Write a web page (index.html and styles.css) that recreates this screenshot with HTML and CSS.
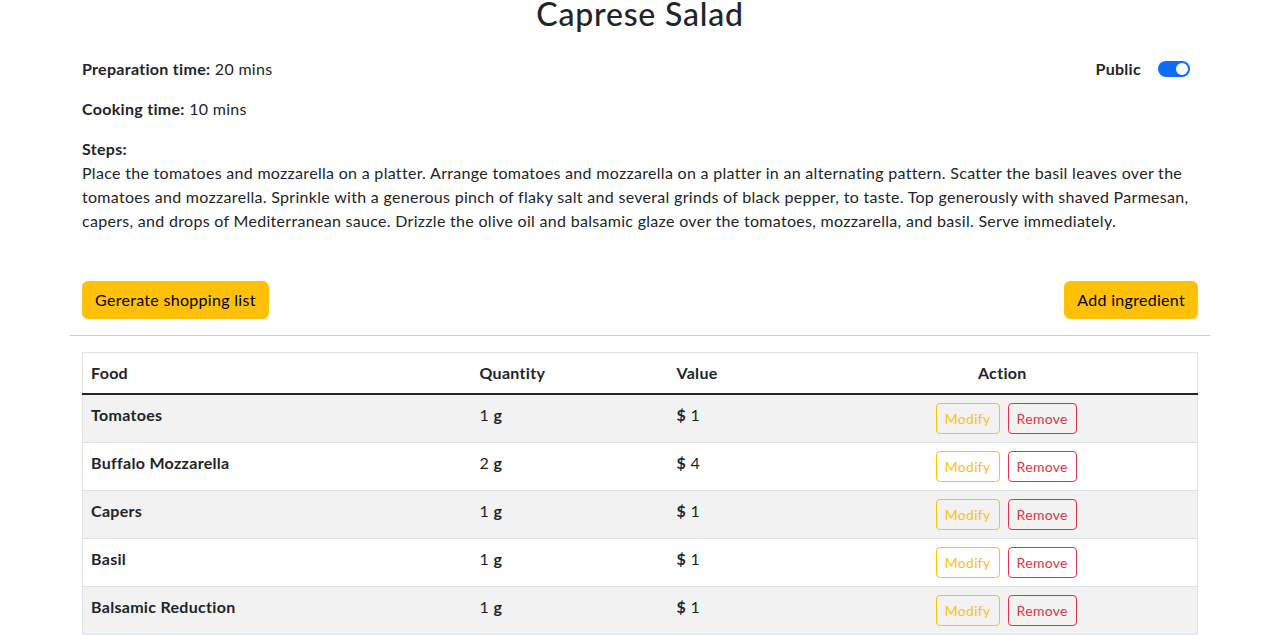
FILE: index.html
```html
<!DOCTYPE html>
<html lang="en">
<head>
<meta charset="utf-8">
<title>Caprese Salad</title>
<link rel="stylesheet" href="styles.css">
</head>
<body>
<div class="container">
  <h1 class="title">Caprese Salad</h1>
  <div class="details">
    <div class="meta-row">
      <p class="meta"><b>Preparation time:</b> 20 mins</p>
      <div class="public">
        <span class="public-label">Public</span>
        <span class="switch"><span class="knob"></span></span>
      </div>
    </div>
    <p class="meta"><b>Cooking time:</b> 10 mins</p>
    <div class="steps">
      <b>Steps:</b>
      <p>Place the tomatoes and mozzarella on a platter. Arrange tomatoes and mozzarella on a platter in an alternating pattern. Scatter the basil leaves over the tomatoes and mozzarella. Sprinkle with a generous pinch of flaky salt and several grinds of black pepper, to taste. Top generously with shaved Parmesan, capers, and drops of Mediterranean sauce. Drizzle the olive oil and balsamic glaze over the tomatoes, mozzarella, and basil. Serve immediately.</p>
    </div>
    <div class="actions">
      <button class="btn btn-warning">Gererate shopping list</button>
      <button class="btn btn-warning">Add ingredient</button>
    </div>
  </div>
  <hr class="divider">
  <div class="table-wrap">
    <table class="ingredients">
      <colgroup>
        <col class="c-food"><col class="c-qty"><col class="c-val"><col class="c-act">
      </colgroup>
      <thead>
        <tr><th>Food</th><th>Quantity</th><th>Value</th><th class="th-action">Action</th></tr>
      </thead>
      <tbody>
        <tr class="odd"><td><b>Tomatoes</b></td><td>1 <b>g</b></td><td><b>$</b> 1</td><td><div class="row-actions"><button class="btn-sm btn-outline-warning">Modify</button><button class="btn-sm btn-outline-danger">Remove</button></div></td></tr>
        <tr><td><b>Buffalo Mozzarella</b></td><td>2 <b>g</b></td><td><b>$</b> 4</td><td><div class="row-actions"><button class="btn-sm btn-outline-warning">Modify</button><button class="btn-sm btn-outline-danger">Remove</button></div></td></tr>
        <tr class="odd"><td><b>Capers</b></td><td>1 <b>g</b></td><td><b>$</b> 1</td><td><div class="row-actions"><button class="btn-sm btn-outline-warning">Modify</button><button class="btn-sm btn-outline-danger">Remove</button></div></td></tr>
        <tr><td><b>Basil</b></td><td>1 <b>g</b></td><td><b>$</b> 1</td><td><div class="row-actions"><button class="btn-sm btn-outline-warning">Modify</button><button class="btn-sm btn-outline-danger">Remove</button></div></td></tr>
        <tr class="odd"><td><b>Balsamic Reduction</b></td><td>1 <b>g</b></td><td><b>$</b> 1</td><td><div class="row-actions"><button class="btn-sm btn-outline-warning">Modify</button><button class="btn-sm btn-outline-danger">Remove</button></div></td></tr>
      </tbody>
    </table>
  </div>
</div>
</body>
</html>
```
FILE: styles.css
```css
* { box-sizing: border-box; }
html, body {
  margin: 0;
  padding: 0;
  background: #fff;
}
body {
  font-family: Lato, "Noto Sans", sans-serif;
  font-size: 16px;
  line-height: 24px;
  letter-spacing: 0.3px;
  color: #212529;
}
.container {
  width: 1140px;
  margin: 0 auto;
}
.title {
  margin: 0 0 29px;
  font-size: 32px;
  line-height: 28px;
  letter-spacing: 0.8px;
  font-weight: 500;
  text-align: center;
}
.details {
  padding: 0 12px;
}
.meta-row {
  display: flex;
  justify-content: space-between;
  align-items: center;
}
.meta {
  margin: 0 0 16px;
}
.public {
  display: flex;
  align-items: center;
  gap: 17px;
  margin-right: 8px;
  margin-bottom: 16px;
}
.public-label { font-weight: 700; }
.switch {
  display: flex;
  align-items: center;
  justify-content: flex-end;
  width: 32px;
  height: 16px;
  border-radius: 8px;
  background: #0d6efd;
  padding: 0 2px;
}
.knob {
  width: 12px;
  height: 12px;
  border-radius: 50%;
  background: #fff;
}
.steps p {
  margin: 0 0 16px;
}
.actions {
  display: flex;
  justify-content: space-between;
  margin-top: 48px;
}
.btn {
  font-family: inherit;
  font-size: 16px;
  line-height: 24px;
  letter-spacing: 0.3px;
  padding: 6px 12px;
  border: 1px solid transparent;
  border-radius: 6px;
  color: #000;
  cursor: pointer;
}
.btn-warning {
  background: #ffc107;
  border-color: #ffc107;
}
.divider {
  margin: 16px 0;
  border: 0;
  border-top: 1px solid #cbcccd;
}
.table-wrap {
  padding: 0 12px;
}
.ingredients {
  width: 100%;
  table-layout: fixed;
  border-collapse: collapse;
  border: 1px solid #dee2e6;
}
.c-food { width: 389px; }
.c-qty { width: 197px; }
.c-val { width: 139px; }
.ingredients th {
  text-align: left;
  font-weight: 700;
  padding: 8px;
  border-bottom: 2px solid #212529;
  vertical-align: top;
}
.ingredients th.th-action { text-align: center; }
.ingredients td {
  padding: 8px;
  vertical-align: top;
  border-bottom: 1px solid #dee2e6;
}
.ingredients tr.odd td {
  background: #f2f2f2;
}
.row-actions {
  display: flex;
  justify-content: center;
}
.btn-sm {
  margin-left: 8px;
  font-family: inherit;
  font-size: 14px;
  line-height: 21px;
  letter-spacing: 0.3px;
  padding: 4px 8px;
  border-radius: 4px;
  background: transparent;
  cursor: pointer;
}
.btn-outline-warning {
  border: 1px solid #ffc107;
  color: #ffc107;
}
.btn-outline-danger {
  border: 1px solid #dc3545;
  color: #dc3545;
}
```
